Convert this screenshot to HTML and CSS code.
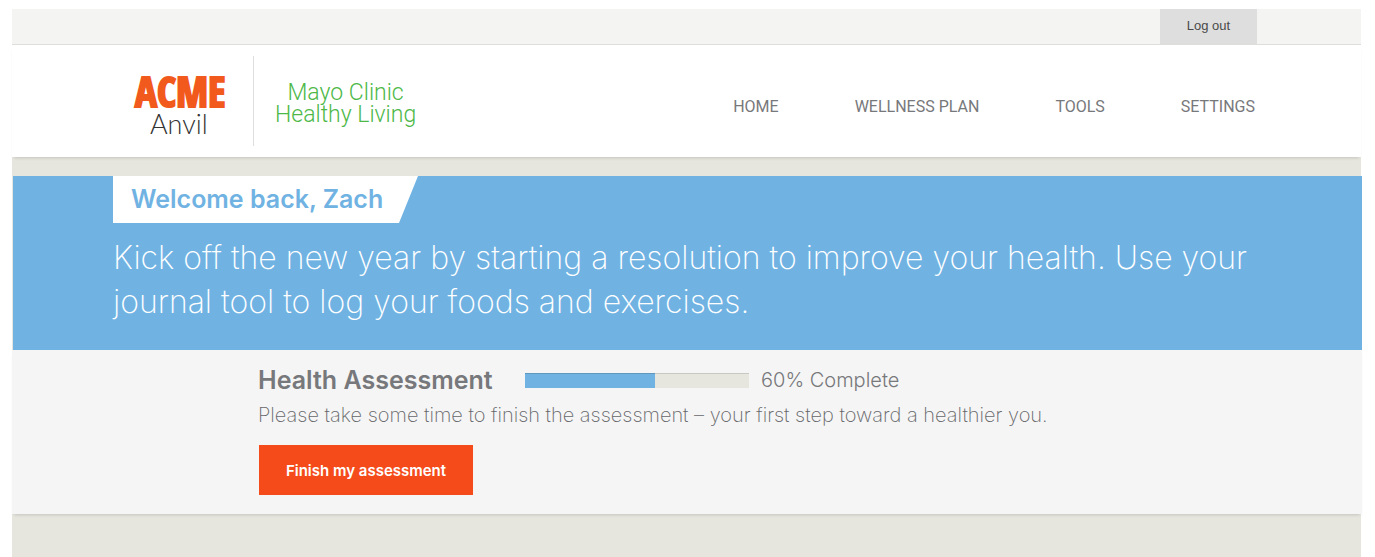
FILE: index.html
```html
<!DOCTYPE html>
<html lang="en">
<head>
<meta charset="utf-8">
<title>Mayo Clinic Healthy Living</title>
<link rel="stylesheet" href="styles.css">
</head>
<body>
<div class="page">
  <div class="topbar"><button class="logout" type="button">Log out</button></div>
  <header class="header">
    <div class="brand">
      <div class="acme"><span class="acme-name">ACME</span><span class="acme-sub">Anvil</span></div>
      <div class="partner"><span>Mayo Clinic</span><span>Healthy Living</span></div>
    </div>
    <nav class="nav">
      <a href="#">HOME</a><a href="#">WELLNESS PLAN</a><a href="#">TOOLS</a><a href="#">SETTINGS</a>
    </nav>
  </header>
  <main>
    <section class="hero">
      <h1 class="welcome">Welcome back, Zach</h1>
      <p class="message">Kick off the new year by starting a resolution to improve your health. Use your journal tool to log your foods and exercises.</p>
    </section>
    <section class="assessment">
      <div class="status">
        <h2 class="title" id="assessment-title">Health Assessment</h2>
        <div class="bar" role="progressbar" aria-labelledby="assessment-title" aria-valuenow="60" aria-valuemin="0" aria-valuemax="100"><div class="fill"></div></div>
        <span class="percent">60% Complete</span>
      </div>
      <p class="note">Please take some time to finish the assessment – your first step toward a healthier you.</p>
      <button class="finish" type="button">Finish my assessment</button>
    </section>
  </main>
</div>
</body>
</html>
```
FILE: styles.css
```css
* { box-sizing: border-box; }
body {
  margin: 0;
  background: #fff;
  color: #77787b;
  font-family: Inter, "Liberation Sans", Arial, sans-serif;
}
h1, h2, p { margin: 0; }
button { border: 0; font-family: inherit; cursor: pointer; }
.page {
  min-height: calc(100vh - 9px);
  margin: 9px 14px 0 12px;
  background: #e6e6df;
}
.topbar {
  display: flex;
  justify-content: flex-end;
  height: 36px;
  padding-right: 104px;
  background: #f4f4f2;
  border-bottom: 1px solid #dededa;
}
.logout { width: 97px; padding-bottom: 3px; background: #dedede; color: #4a4a4a; font-family: "Liberation Sans", Arial, sans-serif; font-size: 13px; }
.header {
  display: flex;
  justify-content: space-between;
  align-items: center;
  height: 112px;
  padding: 0 106px 0 123px;
  background: #fff;
  box-shadow: 0 3px 3px -2px #c4c4be;
}
.brand { display: flex; align-items: center; }
.acme {
  display: flex;
  flex-direction: column;
  justify-content: center;
  width: 119px;
  height: 90px;
  padding-top: 6px;
  border-right: 1px solid #dedede;
}
.acme-name {
  color: #f15a1c;
  font-family: Impact, "Open Sans Condensed", "Open Sans", sans-serif;
  font-size: 41px;
  font-weight: 800;
  line-height: 40px;
  -webkit-text-stroke: 2px #f15a1c;
}
.acme-sub {
  padding-left: 15px;
  color: #333;
  font-family: Lato, sans-serif;
  font-weight: 300;
  font-size: 27px;
  line-height: 26px;
}
.partner {
  display: flex;
  flex-direction: column;
  padding: 6px 0 0 21px;
  color: #4db848;
  font-family: Roboto, sans-serif;
  font-weight: 300;
  font-size: 23px;
  line-height: 22px;
  text-align: center;
}
.nav { display: flex; gap: 76px; padding-top: 10px; }
.nav a { color: #77787b; font-family: Roboto, sans-serif; font-size: 16px; text-decoration: none; }
main { padding-top: 19px; }
.hero {
  margin: 0 -1px 0 1px;
  padding: 0 99px 26px 100px;
  background: #70b3e3;
  color: #fff;
}
.welcome {
  width: 305px;
  padding-left: 18px;
  background: #fff;
  clip-path: polygon(0 0, 100% 0, 286px 100%, 0 100%);
  color: #70b3e3;
  font-size: 25px;
  font-weight: 600;
  line-height: 47px;
}
.message {
  padding-top: 13px;
  font-size: 32px;
  font-weight: 200;
  line-height: 44px;
}
.assessment {
  margin-right: -1px;
  padding: 13px 246px 19px;
  background: #f5f5f5;
  box-shadow: 0 3px 3px -2px #c4c4be;
}
.status { display: flex; align-items: center; }
.title { flex: 0 0 267px; font-size: 25px; font-weight: 600; line-height: 34px; }
.bar { width: 224px; height: 15px; margin-right: 12px; background: #e6e6df; border-top: 1px solid #c8c8c2; }
.fill { width: 58%; height: 100%; background: #70b3e3; box-shadow: 0 -1px #6097bf; }
.percent { font-size: 20px; font-weight: 300; }
.note { padding: 4px 0 16px; color: #66676a; font-size: 20px; font-weight: 200; line-height: 28px; }
.finish {
  width: 214px;
  height: 50px;
  margin-left: 1px;
  background: #f54b1b;
  color: #fff;
  font-size: 15px;
  font-weight: 600;
}
```
